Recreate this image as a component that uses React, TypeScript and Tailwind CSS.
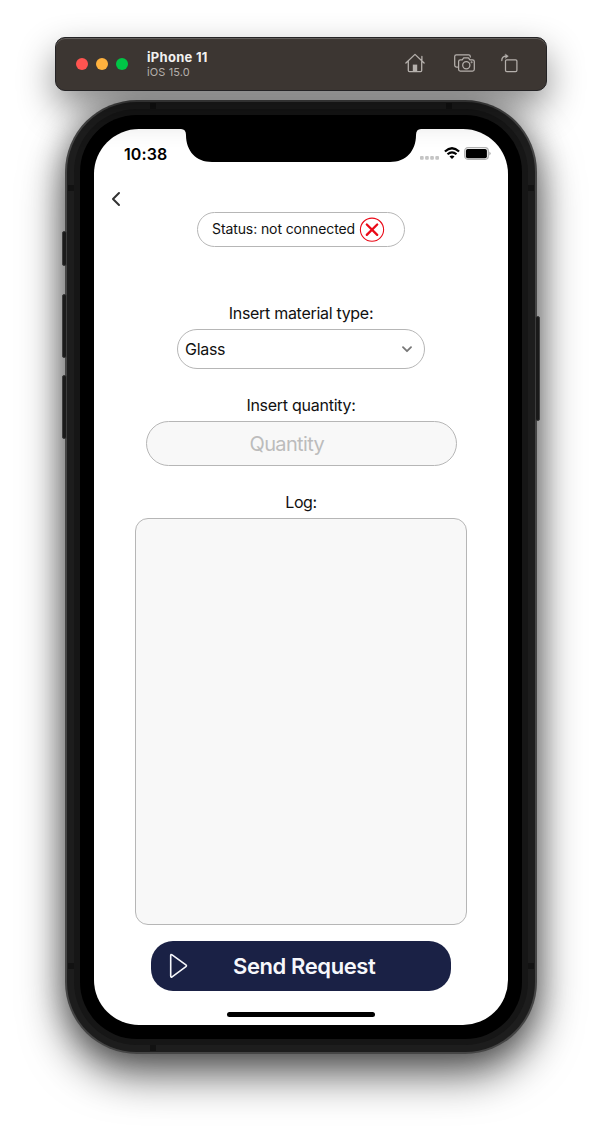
import React from "react";

function HomeIcon() {
  return (
    <svg width="20" height="20" viewBox="0 0 20 20" fill="none" stroke="#b5b0ac" strokeWidth="1.3" strokeLinecap="round" strokeLinejoin="round">
      <path d="M.9 10 10 1.4l9.1 8.6M3.3 8.2v9.3q0 1.1 1.1 1.1h11.2q1.1 0 1.1-1.1V8.2M16.9 7.3V3.4" />
      <path d="M7.800 18.600v-7h4.400v7z" fill="#b5b0ac" stroke="none" />
    </svg>
  );
}

function CameraIcon() {
  return (
    <svg width="21" height="18" viewBox="0 0 21 18" fill="none" stroke="#b5b0ac" strokeWidth="1.25" strokeLinecap="round" strokeLinejoin="round">
      <path d="M4.300 13H2.400Q.7 13 .7 11.300V2.500Q.7.800 2.400.800H14.600Q16.300.800 16.300 2.500V3" />
      <path d="M6.300 5.800H8.200L9.700 3.900H14.400L15.900 5.800H18.500Q20.300 5.800 20.300 7.600V15.300Q20.300 17.100 18.500 17.100H6.300Q4.600 17.100 4.600 15.300V7.600Q4.600 5.800 6.300 5.800Z" />
      <circle cx="12.300" cy="11.200" r="3.600" />
      <circle cx="17.600" cy="8.300" r=".35" />
    </svg>
  );
}

function RotateIcon() {
  return (
    <svg width="17" height="20" viewBox="0 0 17 20" fill="none" stroke="#b5b0ac" strokeWidth="1.25" strokeLinecap="round" strokeLinejoin="round">
      <rect x="4.500" y="6.800" width="11.400" height="11.800" rx="1.300" />
      <path d="M.8 7.600Q.7 3.200 5.500 3.200" />
      <path d="M4.600 1.300 7.300 3.200 4.600 5.200z" fill="#b5b0ac" strokeWidth=".5" />
    </svg>
  );
}

function Toolbar() {
  return (
    <header className="relative z-10 flex h-[54px] w-[492px] items-center rounded-[10px] border border-[#242325] bg-[#3c3632] pl-5 shadow-[inset_0_1px_0_#625e5b,0_16px_36px_rgba(0,0,0,0.45)]">
      <div className="flex gap-2">
        <span className="size-3 rounded-full bg-[#ff5450]" />
        <span className="size-3 rounded-full bg-[#ffb23e]" />
        <span className="size-3 rounded-full bg-[#00c546]" />
      </div>
      <div className="ml-[19px] w-[258px]">
        <h1 className="text-[13px] leading-[15px] font-bold tracking-[0.28px] text-[#f2f1f0]">iPhone 11</h1>
        <p className="text-[11px] leading-[14px] tracking-[0.12px] text-[#b5b0ac]">iOS 15.0</p>
      </div>
      <div className="flex items-center pb-[2px]">
        <HomeIcon />
        <span className="ml-[29px]"><CameraIcon /></span>
        <span className="ml-[26px]"><RotateIcon /></span>
      </div>
    </header>
  );
}

function SideButton({ className }: { className: string }) {
  return <span className={`absolute w-[5px] rounded-[2px] border border-[#3c3c3c] bg-[#1a1a1a] ${className}`} />;
}

function StatusBar() {
  return (
    <div className="relative flex h-[50px] items-center justify-between pr-[17px] pl-[30px]">
      <svg className="absolute top-0 left-[87px]" width="240" height="33" viewBox="0 0 240 33">
        <path d="M0 0Q5 0 5 6C5 22 15 33 31 33H209C225 33 235 22 235 6Q235 0 240 0Z" />
      </svg>
      <span className="text-[16px] leading-5 font-semibold tracking-[0.1px] text-black">10:38</span>
      <div className="flex items-center">
        <svg className="mt-[7px] mr-[5px]" width="19" height="4" viewBox="0 0 19 4" fill="#c5c5c5">
          <rect x="0" y="0" width="3.700" height="3.800" rx="1" />
          <rect x="5.100" y="0" width="3.700" height="3.800" rx="1" />
          <rect x="10.200" y="0" width="3.700" height="3.800" rx="1" />
          <rect x="15.300" y="0" width="3.700" height="3.800" rx="1" />
        </svg>
        <svg className="mr-[4px] mb-[2px]" width="16" height="12" viewBox="0 0 16 12" fill="none" stroke="#000" strokeWidth="2.200">
          <path d="M.9 4.500Q8-2 15.100 4.500M3.500 7.300Q8 3.300 12.500 7.300" />
          <path d="M5.500 9.400Q8 7.600 10.500 9.400L8 11.900Z" fill="#000" stroke="none" />
        </svg>
        <svg className="mb-[2px]" width="27" height="13" viewBox="0 0 27 13">
          <rect x=".7" y=".7" width="23.600" height="11.600" rx="3.200" fill="#fff" stroke="#b0b0b0" strokeWidth="1.300" />
          <rect x="1.900" y="2" width="21" height="9.200" rx="1.800" />
          <path d="M25.400 4.500q2.500 2 0 4z" fill="#a5a5a5" />
        </svg>
      </div>
    </div>
  );
}

function Screen() {
  return (
    <main className="h-[896px] w-[414px] overflow-hidden rounded-[45px] bg-white text-[#111]">
      <StatusBar />
      <div className="flex flex-col items-center">
        <button className="mt-[12px] ml-[17px] h-4 self-start" aria-label="Back">
          <svg width="10" height="16" viewBox="0 0 10 16" fill="none" stroke="#333" strokeWidth="2" strokeLinecap="round" strokeLinejoin="round">
            <path d="M8 2 2 8l6 6" />
          </svg>
        </button>
        <div className="mt-[5px] flex h-[35px] w-[208px] items-center rounded-full border border-[#b6b6b6] pl-[14px]">
          <span className="w-[147px] pb-[2px] text-[14px] leading-5 tracking-[-0.1px] whitespace-nowrap">Status: not connected</span>
          <svg width="26" height="26" viewBox="0 0 26 26" fill="none" stroke="#ea0a18" strokeLinecap="round">
            <circle cx="13" cy="12.700" r="11.600" strokeWidth="1.100" />
            <path d="m7.800 7.500 10.400 10.400M18.200 7.500 7.800 17.900" strokeWidth="2.300" />
          </svg>
        </div>
        <label className="mt-[56px] text-[16px] leading-5 tracking-[-0.3px]">Insert material type:</label>
        <div className="mt-[6px] flex h-10 w-[248px] items-center justify-between rounded-full border border-[#b6b6b6] pr-3 pl-[7px]">
          <span className="text-[16px] leading-5 tracking-[-0.3px]">Glass</span>
          <svg width="10" height="7" viewBox="0 0 10 7" fill="none" stroke="#777" strokeWidth="1.800" strokeLinecap="round" strokeLinejoin="round">
            <path d="m1 1.200 4 4 4-4" />
          </svg>
        </div>
        <label className="mt-[26px] text-[16px] leading-5 tracking-[-0.27px]">Insert quantity:</label>
        <div className="mt-[6px] flex h-[45px] w-[311px] items-center rounded-full border border-[#b6b6b6] bg-[#f8f8f8] pl-[103px]">
          <span className="text-[20px] leading-6 tracking-[-0.65px] text-[#bcbcbc]">Quantity</span>
        </div>
        <label className="mt-[26px] text-[16px] leading-5 tracking-[-0.4px]">Log:</label>
        <div className="mt-[6px] h-[407px] w-[332px] rounded-[13px] border border-[#b6b6b6] bg-[#f8f8f8]" />
        <button className="mt-4 flex h-[50px] w-[300px] items-center rounded-[22px] bg-[#1a2145] pl-[18px] text-[22px] font-semibold tracking-[-0.4px] text-[#f6f7fb]">
          <svg width="20" height="26" viewBox="0 0 20 26" fill="none" stroke="currentColor" strokeWidth="1.600" strokeLinejoin="round">
            <path d="M1.700 2.500Q1.700.800 3.100 1.800L16.900 11.900Q18 12.800 16.900 13.700L3.100 23.800Q1.700 24.800 1.700 23.100Z" />
          </svg>
          <span className="ml-[44px] whitespace-nowrap">Send Request</span>
        </button>
        <div className="mt-[21px] h-[5px] w-[148px] rounded-full bg-black" />
      </div>
    </main>
  );
}

function Phone() {
  return (
    <section className="relative mt-[9px] rounded-[72px] bg-[#454545] p-[2px] shadow-[0_20px_44px_rgba(0,0,0,0.65),0_0_30px_rgba(0,0,0,0.28)]">
      <SideButton className="top-[131px] left-[-3px] h-[35px]" />
      <SideButton className="top-[194px] left-[-3px] h-[64px]" />
      <SideButton className="top-[275px] left-[-3px] h-[64px]" />
      <SideButton className="top-[216px] right-[-3px] h-[105px]" />
      <div className="relative rounded-[70px] bg-[#1d1d1d] p-[7px]">
        <i className="absolute top-px left-[83px] h-[6px] w-[6px] bg-[#121212]" />
        <i className="absolute top-px right-[83px] h-[6px] w-[6px] bg-[#121212]" />
        <i className="absolute top-[83px] left-px h-[6px] w-[6px] bg-[#121212]" />
        <i className="absolute top-[83px] right-px h-[6px] w-[6px] bg-[#121212]" />
        <i className="absolute bottom-[83px] left-px h-[6px] w-[6px] bg-[#121212]" />
        <i className="absolute right-px bottom-[83px] h-[6px] w-[6px] bg-[#121212]" />
        <i className="absolute bottom-px left-[83px] h-[6px] w-[6px] bg-[#121212]" />
        <div className="rounded-[63px] bg-[#161616] p-[6px]">
          <div className="rounded-[57px] bg-black p-[14px]">
            <Screen />
          </div>
        </div>
      </div>
    </section>
  );
}

export default function App() {
  return (
    <div className="flex h-[1128px] w-[602px] flex-col items-center overflow-hidden bg-white pt-[37px] font-['Inter',sans-serif]">
      <Toolbar />
      <Phone />
    </div>
  );
}
